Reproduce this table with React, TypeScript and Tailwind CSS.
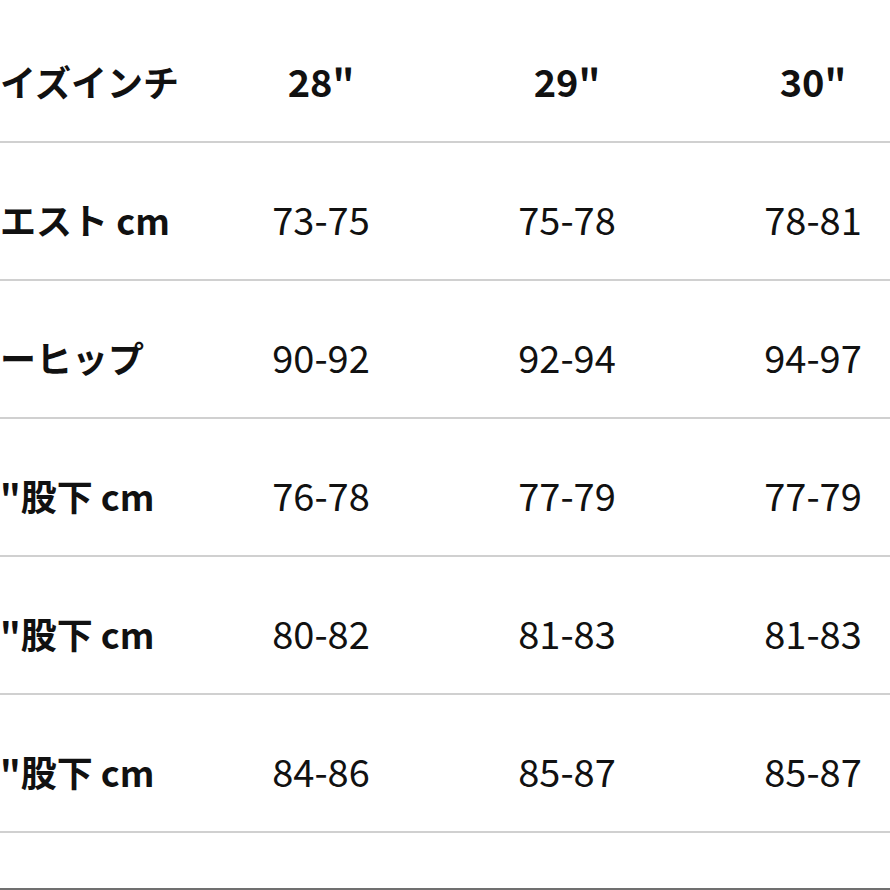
const font = { fontFamily: '"Noto Sans CJK JP", "Noto Sans", sans-serif' }

const header = ['28"', '29"', '30"']

const rows: { label: string; values: string[] }[] = [
  { label: 'エスト cm', values: ['73-75', '75-78', '78-81'] },
  { label: 'ーヒップ', values: ['90-92', '92-94', '94-97'] },
  { label: '"股下 cm', values: ['76-78', '77-79', '77-79'] },
  { label: '"股下 cm', values: ['80-82', '81-83', '81-83'] },
  { label: '"股下 cm', values: ['84-86', '85-87', '85-87'] },
]

export default function App() {
  return (
    <div className="w-[890px] h-[890px] overflow-hidden bg-white text-[#111]" style={font}>
      {/* header */}
      <div className="flex h-[143px] items-center border-b-2 border-[#d0d0d0] pt-5 leading-none">
        <div className="w-[198px] shrink-0 text-[36px] font-bold whitespace-nowrap">イズインチ</div>
        {header.map((h) => (
          <div key={h} className="w-[246px] shrink-0 text-center text-[38px] font-bold">
            {h}
          </div>
        ))}
      </div>

      {rows.map((r, i) => (
        <div key={i} className="flex h-[138px] items-center border-b-2 border-[#d0d0d0] pt-4 leading-none">
          <div className="w-[198px] shrink-0 text-[36px] font-bold whitespace-nowrap">{r.label}</div>
          {r.values.map((v, j) => (
            <div key={j} className="w-[246px] shrink-0 text-center text-[38px]">
              {v}
            </div>
          ))}
        </div>
      ))}

      <div className="h-[55px]" />
      <div className="h-[2px] bg-[#707070]" />
    </div>
  )
}
